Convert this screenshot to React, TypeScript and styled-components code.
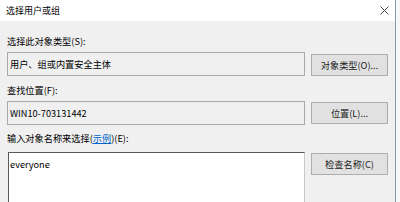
import React from 'react';
import styled, { createGlobalStyle } from 'styled-components';

const GlobalStyle = createGlobalStyle`
  html, body {
    margin: 0;
    padding: 0;
    background: #f7f7f7;
  }
  body {
    font-family: "Noto Sans CJK SC", "Microsoft YaHei", sans-serif;
    font-size: 9.2px;
    color: #000;
  }
`

const Page = styled.div`
  display: flex;
  width: 400px;
  height: 202px;
  overflow: hidden;
`

const Window = styled.div`
  width: 395px;
  height: 202px;
  background: #f0f0f0;
  border-right: 1px solid #7f9cad;
  display: flex;
  flex-direction: column;
  overflow: hidden;
`

const TitleBar = styled.div`
  height: 21px;
  flex: none;
  background: #fff;
  display: flex;
  align-items: center;
  justify-content: space-between;
  padding: 0 4px 0 6px;
`

const Title = styled.span`
  font-size: 9px;
  line-height: 21px;
`

const Close = styled.div`
  width: 14px;
  height: 14px;
  display: flex;
  align-items: center;
  justify-content: center;
`

const Content = styled.div`
  padding: 13px 0 0 7px;
  display: flex;
  flex-direction: column;
`

const Label = styled.div<{ $gap?: number; $below?: number }>`
  line-height: 14px;
  height: 14px;
  margin-top: ${p => p.$gap ?? 0}px;
  margin-bottom: ${p => p.$below ?? 4}px;
  white-space: nowrap;
`

const Link = styled.span`
  color: #0066cc;
  text-decoration: underline;
`

const Row = styled.div`
  display: grid;
  grid-template-columns: 298px 77px;
  column-gap: 6px;
  align-items: start;
`

const Field = styled.div`
  height: 24px;
  box-sizing: border-box;
  border: 1px solid #a9a9a9;
  background: #f0f0f0;
  padding: 0 2px;
  line-height: 22px;
  white-space: nowrap;
`

const Input = styled.div`
  height: 60px;
  box-sizing: border-box;
  margin-left: 1px;
  background: #fff;
  border-top: 1px solid #5a5a5a;
  border-left: 1px solid #5a5a5a;
  border-right: 1px solid #c8c8c8;
  padding: 4px 1px;
  line-height: 14px;
`

const Button = styled.div<{ $top?: number }>`
  height: 22px;
  margin-top: ${p => p.$top ?? 1}px;
  box-sizing: border-box;
  border: 1px solid #adadad;
  background: #e1e1e1;
  color: #222;
  display: flex;
  align-items: center;
  justify-content: center;
  white-space: nowrap;
`

export default function App() {
  return (
    <>
      <GlobalStyle />
      <Page>
        <Window>
          <TitleBar>
            <Title>选择用户或组</Title>
            <Close>
              <svg width="9" height="9" viewBox="0 0 9 9">
                <path d="M0.5 0.5 L8.5 8.5 M8.5 0.5 L0.5 8.5" stroke="#333" strokeWidth="0.9" fill="none" />
              </svg>
            </Close>
          </TitleBar>
          <Content>
            <Label>选择此对象类型(S):</Label>
            <Row>
              <Field>用户、组或内置安全主体</Field>
              <Button $top={2}>对象类型(O)...</Button>
            </Row>
            <Label $gap={7}>查找位置(F):</Label>
            <Row>
              <Field>WIN10-703131442</Field>
              <Button>位置(L)...</Button>
            </Row>
            <Label $gap={6} $below={7}>
              输入对象名称来选择(<Link>示例</Link>)(E):
            </Label>
            <Row>
              <Input>everyone</Input>
              <Button>检查名称(C)</Button>
            </Row>
          </Content>
        </Window>
      </Page>
    </>
  );
}
